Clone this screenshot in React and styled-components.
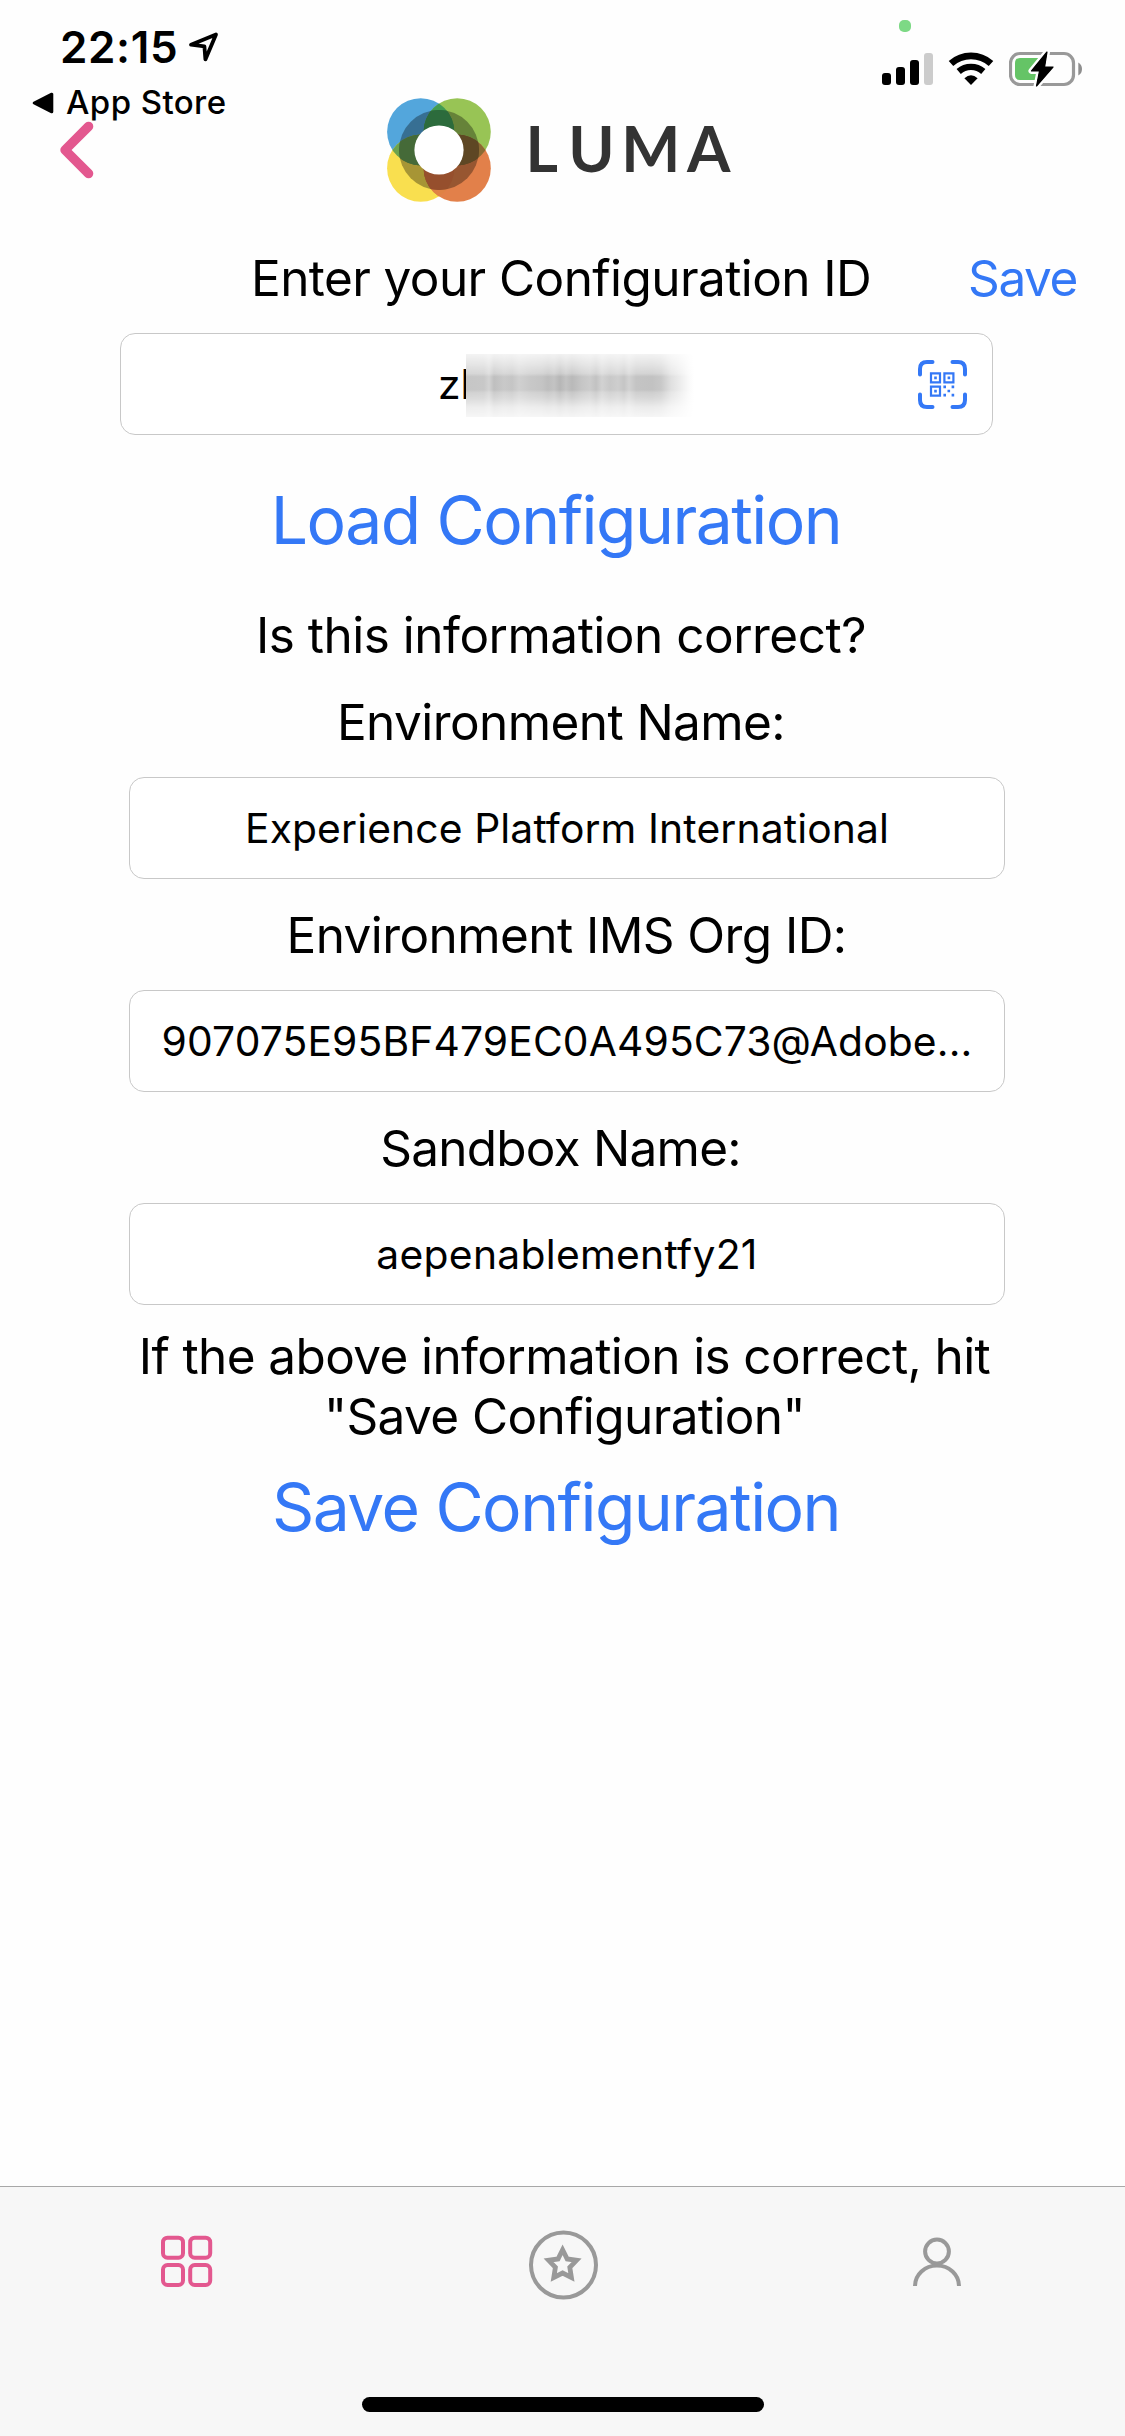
import React from 'react';
import styled, { createGlobalStyle } from 'styled-components';

const BLUE = '#3478f6';
const PINK = '#e3588f';
const GREY = '#999999';

const GlobalStyle = createGlobalStyle`
  * { box-sizing: border-box; }
  body {
    margin: 0;
    background: #fefefe;
    color: #000;
    font-family: Inter, "Liberation Sans", sans-serif;
  }
  svg { display: block; flex: none; }
`;

const Screen = styled.div`
  display: flex;
  flex-direction: column;
  width: 1125px;
  height: 2436px;
  overflow: hidden;
  background: #fefefe;
`;

const StatusBar = styled.header`
  display: flex;
  justify-content: space-between;
  height: 98px;
  padding: 0 40px 0 32px;
`;

const StatusLeft = styled.div`
  display: flex;
  flex-direction: column;
  padding-top: 25px;
`;

const TimeRow = styled.div`
  display: flex;
  align-items: center;
  gap: 10px;
  height: 44px;
  padding-left: 28px;
`;

const Time = styled.span`
  font-size: 44px;
  font-weight: 600;
  line-height: 44px;
  letter-spacing: 0.63px;
`;

const BackToApp = styled.div`
  display: flex;
  align-items: center;
  gap: 12px;
  height: 33px;
  margin-top: 17px;
`;

const AppName = styled.span`
  font-size: 33px;
  font-weight: 500;
  line-height: 33px;
  letter-spacing: 0.42px;
  white-space: nowrap;
`;

const StatusRight = styled.div`
  display: flex;
  align-items: flex-start;
  gap: 14px;
`;

const Signal = styled.div`
  display: flex;
  flex-direction: column;
  gap: 21px;
  padding-top: 20px;
`;

const CameraDot = styled.div`
  width: 12px;
  height: 12px;
  margin-left: 17px;
  border-radius: 5px;
  background: #7dd985;
`;

const Bars = styled.div`
  display: flex;
  align-items: flex-end;
  gap: 5px;
  height: 32px;
`;

const Bar = styled.i`
  width: 9px;
  height: ${(p) => p.$h}px;
  border-radius: 3px;
  background: ${(p) => (p.$off ? '#cccccc' : '#000')};
`;

const StatusIcon = styled.div`
  padding-top: 50px;
`;

const NavBar = styled.nav`
  display: flex;
  align-items: flex-start;
  height: 150px;
  padding-left: 55px;
`;

const BackButton = styled.button`
  margin: 19px 285px 0 0;
  padding: 0;
  border: 0;
  background: none;
`;

const LogoMark = styled.svg`
  margin-top: -2px;
`;

const Wordmark = styled.text`
  font-family: Lato, "Liberation Sans", sans-serif;
  font-size: 62.5px;
  font-weight: 700;
  fill: #333333;
`;

const TitleRow = styled.div`
  display: flex;
  justify-content: space-between;
  padding: 0 48px 0 251px;
`;

const Label = styled.div`
  font-size: 49.5px;
  line-height: 60px;
  letter-spacing: ${(p) => p.$track}px;
  white-space: nowrap;
  text-align: center;
  margin-top: ${(p) => p.$top || 0}px;
  padding-right: ${(p) => p.$pull || 0}px;
  padding-left: ${(p) => p.$push || 0}px;
`;

const SaveLink = styled.button`
  padding: 0;
  border: 0;
  background: none;
  color: ${BLUE};
  font: inherit;
  font-size: 49.5px;
  line-height: 60px;
  letter-spacing: -1.4px;
`;

const LinkButton = styled.button`
  display: block;
  width: 876px;
  margin: ${(p) => p.$top}px 0 0 118px;
  padding: 0;
  border: 0;
  background: none;
  color: ${BLUE};
  font: inherit;
  font-size: 66px;
  line-height: 80px;
  letter-spacing: -1.55px;
  text-align: center;
`;

const Field = styled.div`
  display: flex;
  align-items: center;
  justify-content: center;
  width: 876px;
  height: 102px;
  margin: 25px 0 0 129px;
  border: 1px solid #c8c8c8;
  border-radius: 15px;
  background: #fff;
  font-size: 40.8px;
  letter-spacing: ${(p) => p.$track}px;
  white-space: nowrap;
`;

const IdField = styled(Field)`
  justify-content: flex-start;
  width: 873px;
  margin-left: 120px;
  padding: 0 25px 0 317px;
`;

const VisibleId = styled.span`
  flex: none;
  width: 34px;
  margin-right: -6px;
`;

const Redaction = styled.span`
  position: relative;
  width: 228px;
  height: 63px;
  margin: 3px auto 0 0;
  background: #fff;

  &::before {
    content: '';
    display: block;
    height: 100%;
    background: linear-gradient(
      90deg,
      #c6c6c6 0, #c8c8c8 18px, #d3d3d3 23px, #bfbfbf 28px, #c9c9c9 38px,
      #c5c5c5 46px, #d0d0d0 53px, #c8c8c8 64px, #c4c4c4 76px, #bdbdbd 82px,
      #c3c3c3 88px, #b6b6b6 94px, #c3c3c3 100px, #b9b9b9 106px, #c6c6c6 116px,
      #cccccc 124px, #c2c2c2 130px, #d2d2d2 136px, #c8c8c8 144px, #cecece 152px,
      #c5c5c5 158px, #d2d2d2 163px, #c4c4c4 170px, #c2c2c2 186px, #c8c8c8 195px,
      #e0e0e0 205px, #eeeeee 215px, #fafafa 223px, #ffffff 228px
    );
    mask-image: linear-gradient(
      180deg,
      rgba(0, 0, 0, 0.2) 0%, rgba(0, 0, 0, 0.45) 16%, rgba(0, 0, 0, 0.72) 31%,
      #000 36%, #000 57%, rgba(0, 0, 0, 0.8) 61%, rgba(0, 0, 0, 0.65) 70%,
      rgba(0, 0, 0, 0.32) 84%, rgba(0, 0, 0, 0.15) 100%
    );
  }
`;

const Note = styled.p`
  margin: 21px 0 0 4px;
  font-size: 49.5px;
  line-height: 60.4px;
  letter-spacing: -0.61px;
  text-align: center;
`;

const Main = styled.main`
  flex: 1;
`;

const TabBar = styled.footer`
  display: flex;
  flex-direction: column;
  align-items: center;
  justify-content: space-between;
  height: 250px;
  padding: 38px 0 24px;
  border-top: 1px solid #a8a8a8;
  background: #f7f7f7;
`;

const Tabs = styled.div`
  display: grid;
  grid-template-columns: repeat(3, 375px);
  justify-items: center;
`;

const HomeIndicator = styled.div`
  width: 402px;
  height: 15px;
  border-radius: 8px;
  background: #000;
`;

const LocationArrow = () => (
  <svg width="32" height="32" viewBox="189 31 32 32" fill="none" stroke="#000" strokeWidth="3.8" strokeLinejoin="round">
    <path d="M217 34.4 L192 44.7 L205.4 46.4 L206.4 59.4 Z" />
  </svg>
);

const BackTriangle = () => (
  <svg width="22" height="24" viewBox="0 0 22 24" stroke="#000" strokeWidth="3" strokeLinejoin="round">
    <path d="M2.2 12 L19.8 3.2 V20.8 Z" />
  </svg>
);

const Wifi = () => (
  <svg width="48" height="38" viewBox="947 50 48 38" fill="none" stroke="#000">
    <path d="M951 63.5 A30 30 0 0 1 991 63.5" strokeWidth="6.8" />
    <path d="M958.7 71.5 A18.6 18.6 0 0 1 983.3 71.5" strokeWidth="6.4" />
    <path d="M964.4 78.3 Q971 72.3 977.6 78.3 L971 85 Z" fill="#000" stroke="none" />
  </svg>
);

const Battery = () => (
  <svg width="76" height="40" viewBox="1009 50 76 40">
    <rect x="1010.5" y="53.5" width="63" height="31" rx="9.5" fill="none" stroke={GREY} strokeWidth="3.2" />
    <path d="M1078.3 62.5 Q1082 64.5 1082 69 Q1082 73.5 1078.3 75.5 Z" fill="#8e8e8e" />
    <path d="M1020 58 H1041 V80 H1020 Q1015 80 1015 75 V63 Q1015 58 1020 58 Z" fill="#65c466" />
    <path
      d="M1047 52 L1031.5 71 H1039.5 L1036.5 86 L1053 67 H1044.6 Z"
      fill="#000"
      stroke="#fff"
      strokeWidth="6"
      strokeLinejoin="round"
      paintOrder="stroke"
    />
    <path d="M1047 52 L1031.5 71 H1039.5 L1036.5 86 L1053 67 H1044.6 Z" stroke="#000" strokeWidth="1.2" strokeLinejoin="round" />
  </svg>
);

const Chevron = () => (
  <svg width="45" height="66" viewBox="55 117 45 66" fill="none" stroke={PINK} strokeWidth="9.4" strokeLinecap="round" strokeLinejoin="round">
    <path d="M88.6 126.4 L65 150 L88.6 173.6" />
  </svg>
);

const Logo = () => (
  <LogoMark width="355" height="108" viewBox="385 96 355 108">
    <defs>
      <clipPath id="blue"><circle cx="420.7" cy="131.8" r="33.6" /></clipPath>
      <clipPath id="green"><circle cx="457.2" cy="131.8" r="33.6" /></clipPath>
      <clipPath id="yellow"><circle cx="420.7" cy="168.2" r="33.6" /></clipPath>
      <clipPath id="core"><circle cx="439" cy="150" r="40" /></clipPath>
      <clipPath id="petals">
        <circle cx="420.7" cy="131.8" r="33.6" />
        <circle cx="457.2" cy="131.8" r="33.6" />
        <circle cx="420.7" cy="168.2" r="33.6" />
        <circle cx="457.2" cy="168.2" r="33.6" />
      </clipPath>
    </defs>
    <circle cx="420.7" cy="131.8" r="33.6" fill="#53a6dc" />
    <circle cx="457.2" cy="131.8" r="33.6" fill="#98c455" />
    <circle cx="420.7" cy="168.2" r="33.6" fill="#f9df4f" />
    <circle cx="457.2" cy="168.2" r="33.6" fill="#e2804a" />
    <circle cx="457.2" cy="131.8" r="33.6" fill="#419b52" clipPath="url(#blue)" />
    <circle cx="420.7" cy="168.2" r="33.6" fill="#6ca34e" clipPath="url(#blue)" />
    <circle cx="457.2" cy="168.2" r="33.6" fill="#8a6a33" clipPath="url(#green)" />
    <circle cx="457.2" cy="168.2" r="33.6" fill="#df8245" clipPath="url(#yellow)" />
    <g clipPath="url(#petals)">
      <circle cx="439" cy="150" r="40" fill="#000" opacity="0.33" />
    </g>
    <g clipPath="url(#blue)">
      <circle cx="457.2" cy="131.8" r="33.6" fill="#2c6b3c" clipPath="url(#core)" />
      <circle cx="420.7" cy="168.2" r="33.6" fill="#456a38" clipPath="url(#core)" />
    </g>
    <g clipPath="url(#green)">
      <circle cx="457.2" cy="168.2" r="33.6" fill="#5e4724" clipPath="url(#core)" />
    </g>
    <g clipPath="url(#yellow)">
      <circle cx="457.2" cy="168.2" r="33.6" fill="#964f2d" clipPath="url(#core)" />
    </g>
    <circle cx="439" cy="150" r="24.6" fill="#fff" />
    <Wordmark y="171.7" x="525.5 568.3 621.2 687">LUMA</Wordmark>
  </LogoMark>
);

const QrScan = () => (
  <svg width="49" height="49" viewBox="0 0 49 49" fill="none" stroke={BLUE}>
    <path
      d="M2 14.5 V9 Q2 2 9 2 H14.5 M34.5 2 H40 Q47 2 47 9 V14.5 M47 34.5 V40 Q47 47 40 47 H34.5 M14.5 47 H9 Q2 47 2 40 V34.5"
      strokeWidth="4"
      strokeLinecap="round"
    />
    <path d="M13 13.4 h9 v9 h-9 Z M26.4 13.4 h9 v9 h-9 Z M13 26.6 h9 v9 h-9 Z" strokeWidth="2.2" />
    <path
      d="M16.2 16.6 h2.6 v2.6 h-2.6 Z M29.6 16.6 h2.6 v2.6 h-2.6 Z M16.2 29.8 h2.6 v2.6 h-2.6 Z M25.4 25.6 h2.6 v2.6 h-2.6 Z M33.6 25.6 h2.6 v2.6 h-2.6 Z M29.5 29.7 h2.6 v2.6 h-2.6 Z M25.4 33.8 h2.6 v2.6 h-2.6 Z M33.6 33.8 h2.6 v2.6 h-2.6 Z"
      fill={BLUE}
      stroke="none"
    />
  </svg>
);

const GridIcon = () => (
  <svg width="80" height="80" viewBox="148 2225 80 80" fill="none" stroke={PINK} strokeWidth="4">
    <rect x="163" y="2237.7" width="20" height="20" rx="4.5" />
    <rect x="190.2" y="2237.7" width="20" height="20" rx="4.5" />
    <rect x="163" y="2265" width="20" height="20" rx="4.5" />
    <rect x="190.2" y="2265" width="20" height="20" rx="4.5" />
  </svg>
);

const StarIcon = () => (
  <svg width="80" height="80" viewBox="523 2225 80 80" fill="none" stroke={GREY}>
    <circle cx="563.5" cy="2265" r="32.5" strokeWidth="4" />
    <path
      d="M562.6 2249.8 L567.2 2259 L576.6 2260.3 L569.8 2267.4 L571.4 2277.4 L562.6 2273 L553.8 2277.4 L555.4 2267.4 L548.6 2260.3 L558 2259 Z"
      strokeWidth="4.8"
    />
  </svg>
);

const PersonIcon = () => (
  <svg width="80" height="80" viewBox="898 2225 80 80" fill="none" stroke={GREY} strokeWidth="4">
    <circle cx="937" cy="2251.5" r="11.9" />
    <path d="M915 2286 A22 20.5 0 0 1 959 2286" />
  </svg>
);

export default function App() {
  return (
    <Screen>
      <GlobalStyle />
      <StatusBar>
        <StatusLeft>
          <TimeRow>
            <Time>22:15</Time>
            <LocationArrow />
          </TimeRow>
          <BackToApp>
            <BackTriangle />
            <AppName>App Store</AppName>
          </BackToApp>
        </StatusLeft>
        <StatusRight>
          <Signal>
            <CameraDot />
            <Bars>
              <Bar $h={12} />
              <Bar $h={18} />
              <Bar $h={25} />
              <Bar $h={32} $off />
            </Bars>
          </Signal>
          <StatusIcon><Wifi /></StatusIcon>
          <StatusIcon><Battery /></StatusIcon>
        </StatusRight>
      </StatusBar>
      <NavBar>
        <BackButton aria-label="Back"><Chevron /></BackButton>
        <Logo />
      </NavBar>
      <Main>
        <TitleRow>
          <Label $track={-0.59}>Enter your Configuration ID</Label>
          <SaveLink>Save</SaveLink>
        </TitleRow>
        <IdField $track={0}>
          <VisibleId>zl</VisibleId>
          <Redaction />
          <QrScan />
        </IdField>
        <LinkButton $top={45}>Load Configuration</LinkButton>
        <Label $track={-0.5} $top={45} $pull={3}>Is this information correct?</Label>
        <Label $track={-0.58} $top={27} $pull={3}>Environment Name:</Label>
        <Field $track={0.12}>Experience Platform International</Field>
        <Label $track={-0.58} $top={26} $push={8}>Environment IMS Org ID:</Label>
        <Field $track={0.13}>907075E95BF479EC0A495C73@Adobe...</Field>
        <Label $track={-0.77} $top={26} $pull={4}>Sandbox Name:</Label>
        <Field $track={0.28}>aepenablementfy21</Field>
        <Note>
          If the above information is correct, hit
          <br />
          "Save Configuration"
        </Note>
        <LinkButton $top={20}>Save Configuration</LinkButton>
      </Main>
      <TabBar>
        <Tabs>
          <GridIcon />
          <StarIcon />
          <PersonIcon />
        </Tabs>
        <HomeIndicator />
      </TabBar>
    </Screen>
  );
}
